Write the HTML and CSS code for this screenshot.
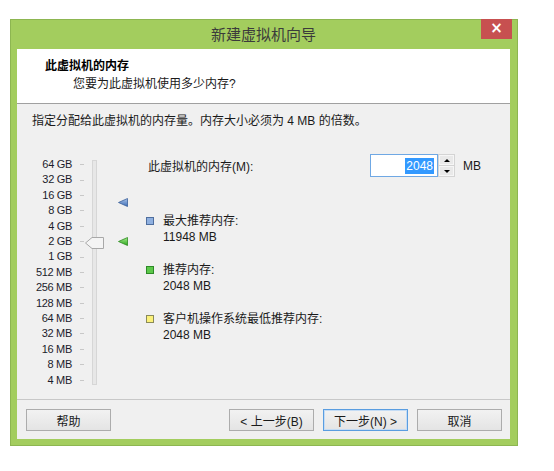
FILE: index.html
```html
<!DOCTYPE html>
<html lang="zh-CN">
<head>
    <meta charset="UTF-8">
    <title>新建虚拟机向导</title>
    <link rel="stylesheet" href="styles.css">
</head>
<body>
    <div class="window">
        <div class="titlebar">
            <span class="title">新建虚拟机向导</span>
            <span class="close">×</span>
        </div>

        <div class="client">
            <div class="header">
                <div class="header-title">此虚拟机的内存</div>
                <div class="header-sub">您要为此虚拟机使用多少内存?</div>
            </div>

            <div class="body">
                <p class="desc">指定分配给此虚拟机的内存量。内存大小必须为 4 MB 的倍数。</p>

                <div class="memory">
                    <div class="scale">
                        <div class="scale-labels">
                            <span>64 GB</span><span>32 GB</span><span>16 GB</span><span>8 GB</span>
                            <span>4 GB</span><span>2 GB</span><span>1 GB</span><span>512 MB</span>
                            <span>256 MB</span><span>128 MB</span><span>64 MB</span><span>32 MB</span>
                            <span>16 MB</span><span>8 MB</span><span>4 MB</span>
                        </div>
                        <div class="scale-ticks">
                            <i></i><i></i><i></i><i></i><i></i><i></i><i></i><i></i>
                            <i></i><i></i><i></i><i></i><i></i><i></i><i></i>
                        </div>
                        <div class="slider">
                            <div class="track"></div>
                            <svg class="thumb" style="top: 80px" width="19" height="12" viewBox="0 0 19 12">
                                <polygon points="0.5,6 7,0.5 18.5,0.5 18.5,11.5 7,11.5" fill="#f4f4f4" stroke="#a8a8a8"/>
                            </svg>
                        </div>
                        <div class="markers">
                            <svg class="marker" style="top: 41px" width="10" height="9" viewBox="0 0 10 9">
                                <defs>
                                    <linearGradient id="mblue" x1="0" y1="0" x2="0" y2="1">
                                        <stop offset="0" stop-color="#a9c3ea"/>
                                        <stop offset="1" stop-color="#3d6db5"/>
                                    </linearGradient>
                                </defs>
                                <polygon points="0.5,4.5 9.5,0.5 9.5,8.5" fill="url(#mblue)" stroke="#3a5f9a" stroke-width="0.8"/>
                            </svg>
                            <svg class="marker" style="top: 80px" width="10" height="9" viewBox="0 0 10 9">
                                <defs>
                                    <linearGradient id="mgreen" x1="0" y1="0" x2="0" y2="1">
                                        <stop offset="0" stop-color="#a6ec8c"/>
                                        <stop offset="1" stop-color="#2aa51c"/>
                                    </linearGradient>
                                </defs>
                                <polygon points="0.5,4.5 9.5,0.5 9.5,8.5" fill="url(#mgreen)" stroke="#2c8a20" stroke-width="0.8"/>
                            </svg>
                        </div>
                    </div>

                    <div class="settings">
                        <div class="size-row">
                            <label class="size-label">此虚拟机的内存(M):</label>
                            <div class="spin">
                                <div class="spin-input"><span class="selected">2048</span></div>
                                <div class="spin-buttons">
                                    <span class="spin-btn"><i class="up"></i></span>
                                    <span class="spin-btn"><i class="down"></i></span>
                                </div>
                            </div>
                            <span class="unit">MB</span>
                        </div>

                        <div class="legend">
                            <div class="legend-item">
                                <span class="swatch blue"></span>
                                <div>
                                    <div>最大推荐内存:</div>
                                    <div>11948 MB</div>
                                </div>
                            </div>
                            <div class="legend-item">
                                <span class="swatch green"></span>
                                <div>
                                    <div>推荐内存:</div>
                                    <div>2048 MB</div>
                                </div>
                            </div>
                            <div class="legend-item">
                                <span class="swatch yellow"></span>
                                <div>
                                    <div>客户机操作系统最低推荐内存:</div>
                                    <div>2048 MB</div>
                                </div>
                            </div>
                        </div>
                    </div>
                </div>
            </div>

            <div class="footer">
                <button class="btn">帮助</button>
                <div class="nav">
                    <button class="btn">&lt; 上一步(B)</button>
                    <button class="btn default">下一步(N) &gt;</button>
                    <button class="btn">取消</button>
                </div>
            </div>
        </div>
    </div>
</body>
</html>
```

FILE: styles.css
```css
body {
    margin: 0;
    background: #ffffff;
    font-family: 'Liberation Sans', 'Noto Sans CJK SC', sans-serif;
    font-size: 12px;
    color: #1a1a1a;
}

/* window frame */
.window {
    position: relative;
    box-sizing: border-box;
    width: 508px;
    height: 427px;
    margin: 19px 0 0 10px;
    padding: 0 7px 6px 6px;
    background: #a3cd5e;
    border: 1px solid #8db651;
    display: flex;
    flex-direction: column;
}
.titlebar {
    height: 29px;
    display: flex;
    align-items: center;
    justify-content: center;
    padding-bottom: 2px;
    box-sizing: border-box;
}
.title {
    font-family: 'Noto Sans CJK SC', sans-serif;
    font-size: 15px;
    color: #3b3b3b;
}
.close {
    position: absolute;
    top: -1px;
    right: 5px;
    width: 31px;
    height: 20px;
    background: #c75050;
    color: #fff;
    font-family: 'DejaVu Sans', sans-serif;
    font-size: 15px;
    font-weight: bold;
    line-height: 19px;
    text-align: center;
}

.client {
    flex: 1;
    display: flex;
    flex-direction: column;
    background: #f0f0f0;
}

/* wizard header */
.header {
    height: 55px;
    box-sizing: border-box;
    background: #fff;
    border-bottom: 1px solid #a0a0a0;
    padding: 9px 0 0 28px;
    line-height: 16px;
}
.header-title {
    font-weight: bold;
    color: #000;
}
.header-sub {
    margin: 2px 0 0 28px;
}

/* body */
.body {
    flex: 1;
    padding: 9px 0 0 15px;
}
.desc {
    margin: 0;
    line-height: 16px;
}
.memory {
    display: flex;
    margin-top: 28px;
}

.scale {
    display: flex;
    position: relative;
}
.scale-labels {
    width: 40px;
    display: flex;
    flex-direction: column;
    align-items: flex-end;
    font-size: 11px;
    line-height: 15.4px;
    letter-spacing: -0.3px;
    color: #1c1c2c;
}
.scale-ticks {
    width: 4px;
    margin-left: 8px;
    display: flex;
    flex-direction: column;
}
.scale-ticks i {
    height: 15.4px;
    display: flex;
    align-items: center;
}
.scale-ticks i::after {
    content: '';
    width: 4px;
    height: 1px;
    background: #c8c8c8;
}
.slider {
    position: relative;
    width: 19px;
    margin-left: 1px;
}
.track {
    box-sizing: border-box;
    width: 5px;
    height: 225px;
    margin: 3px 0 0 7px;
    background: #e7e7e7;
    border: 1px solid #d6d6d6;
}
.thumb {
    position: absolute;
    left: 0;
}
.markers {
    position: relative;
    width: 10px;
    margin-left: 14px;
}
.marker {
    position: absolute;
    left: 0;
}

/* right side */
.settings {
    margin-left: 18px;
    margin-top: -3px;
}
.size-row {
    display: flex;
    align-items: center;
}
.size-label {
    width: 222px;
    padding-left: 2px;
}
.spin {
    display: flex;
    height: 23px;
}
.spin-input {
    box-sizing: border-box;
    width: 68px;
    height: 23px;
    background: #fff;
    border: 1px solid #6fa8e4;
    display: flex;
    align-items: center;
    justify-content: flex-end;
    padding-right: 3px;
}
.selected {
    background: #3399ff;
    color: #fff;
    line-height: 16px;
    padding: 0 1px;
    font-size: 12px;
}
.spin-buttons {
    box-sizing: border-box;
    width: 17px;
    display: flex;
    flex-direction: column;
    gap: 1px;
    padding: 1px;
    background: #d4d4d4;
}
.spin-btn {
    flex: 1;
    background: #e9e9e9;
    border: 1px solid #f6f6f6;
    display: flex;
    align-items: center;
    justify-content: center;
}
.spin-btn i {
    width: 0;
    height: 0;
    border-left: 3px solid transparent;
    border-right: 3px solid transparent;
}
.spin-btn .up {
    border-bottom: 3px solid #000;
}
.spin-btn .down {
    border-top: 3px solid #000;
}
.unit {
    margin-left: 8px;
}

.legend {
    margin-top: 36px;
    display: flex;
    flex-direction: column;
    gap: 17px;
}
.legend-item {
    display: flex;
    line-height: 16px;
}
.swatch {
    box-sizing: border-box;
    width: 8px;
    height: 8px;
    margin: 4px 9px 0 0;
    border: 1px solid;
}
.swatch.blue {
    background: #8fb0e0;
    border-color: #4f6e9e;
}
.swatch.green {
    background: #5cc84a;
    border-color: #2e8a27;
}
.swatch.yellow {
    background: #fbf17a;
    border-color: #8a8a5a;
}

/* buttons */
.footer {
    height: 40px;
    box-sizing: border-box;
    border-top: 1px solid #c8c8c8;
    padding: 9px 8px 0 9px;
    display: flex;
    justify-content: space-between;
    align-items: flex-start;
}
.nav {
    display: flex;
    gap: 9px;
}
.btn {
    width: 85px;
    height: 22px;
    padding: 0;
    font-family: 'Liberation Sans', 'Noto Sans CJK SC', sans-serif;
    font-size: 12px;
    color: #1a1a1a;
    background: linear-gradient(#f2f2f2, #e4e4e4);
    border: 1px solid #acacac;
}
.btn.default {
    border-color: #5a9de0;
    box-shadow: inset 0 0 0 1px #c4dcf5;
}
```
